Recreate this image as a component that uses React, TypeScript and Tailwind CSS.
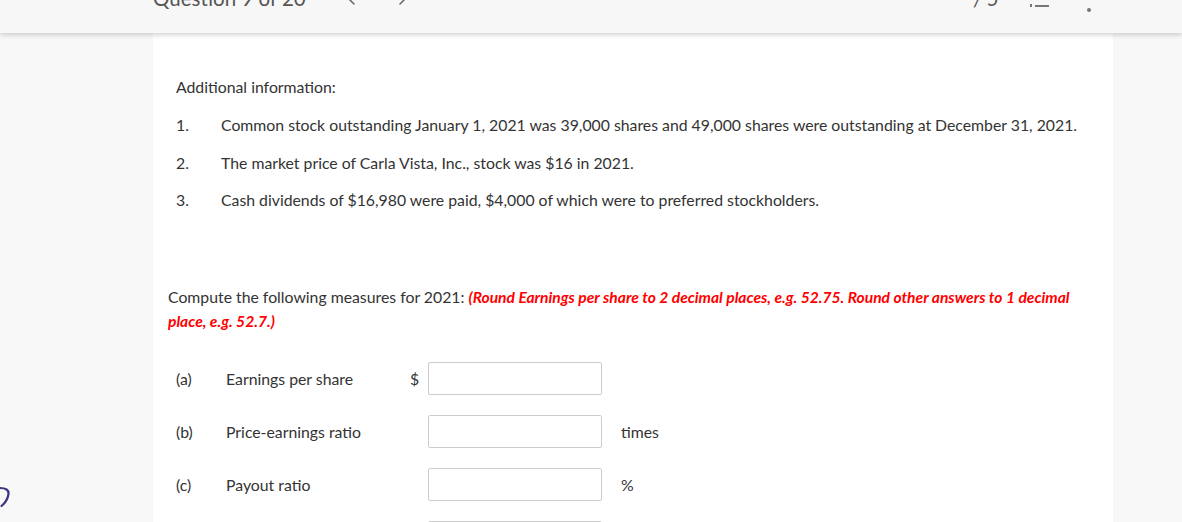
import React from 'react'
import { ChevronLeft, ChevronRight } from 'lucide-react'

const font = { fontFamily: 'Lato, "Liberation Sans", sans-serif' }

const info = [
  'Common stock outstanding January 1, 2021 was 39,000 shares and 49,000 shares were outstanding at December 31, 2021.',
  'The market price of Carla Vista, Inc., stock was $16 in 2021.',
  'Cash dividends of $16,980 were paid, $4,000 of which were to preferred stockholders.',
]

const rows = [
  { key: '(a)', label: 'Earnings per share', pre: '$', unit: '' },
  { key: '(b)', label: 'Price-earnings ratio', pre: '', unit: 'times' },
  { key: '(c)', label: 'Payout ratio', pre: '', unit: '%' },
]

const App = () => {
  return (
    <div className="relative w-[1182px] h-[522px] overflow-hidden bg-[#f8f8f8] text-[#333]" style={font}>
      {/* top bar, scrolled so only the bottom shows */}
      <div className="relative z-10 h-[33px] bg-[#f7f7f7] shadow-[0_2px_5px_rgba(0,0,0,0.18)] overflow-hidden">
        <div className="flex items-center h-[40px] -mt-[22px] text-[#555]">
          <div className="ml-[153px] text-[20.5px] leading-none">Question 9 of 20</div>
          <ChevronLeft className="ml-[33px] w-[24px] h-[24px] text-[#666]" strokeWidth={1.5} />
          <ChevronRight className="ml-[28px] w-[24px] h-[24px] text-[#666]" strokeWidth={1.5} />
          <div className="ml-auto flex items-center">
            <div className="text-[20.5px] leading-none italic">/ 5</div>
            <div className="ml-[31px] flex flex-col gap-[4px] w-[19px] mt-[8px]">
              <div className="flex items-center gap-[3px]"><div className="w-[2px] h-[3px] bg-[#777]" /><div className="flex-1 h-[2px] bg-[#777]" /></div>
              <div className="flex items-center gap-[3px]"><div className="w-[2px] h-[3px] bg-[#777]" /><div className="flex-1 h-[2px] bg-[#777]" /></div>
            </div>
            <div className="ml-[38px] mr-[91px] w-[4px] h-[4px] mt-[24px] rounded-full bg-[#777]" />
          </div>
        </div>
      </div>

      <div className="ml-[153px] w-[960px] h-[489px] bg-white text-[15.8px]">
        <div className="pl-[23px] pt-[44px]">
          <p className="leading-[20px]">Additional information:</p>
          <div className="mt-[18px] flex flex-col gap-[17.5px]">
            {info.map((t, i) => (
              <div key={i} className="flex leading-[20px]">
                <span className="w-[45px]">{i + 1}.</span>
                <span>{t}</span>
              </div>
            ))}
          </div>
        </div>

        <p className="ml-[15px] mt-[75px] w-[915px] leading-[23px]">
          Compute the following measures for 2021:{' '}
          <span className="text-[#ff0000] font-bold italic text-[15.6px]">
            (Round Earnings per share to 2 decimal places, e.g. 52.75. Round other answers to 1 decimal place, e.g. 52.7.)
          </span>
        </p>

        <div className="ml-[23px] mt-[29px] flex flex-col gap-[20px]">
          {rows.map((r) => (
            <div key={r.key} className="flex items-center h-[33px]">
              <span className="w-[50px]">{r.key}</span>
              <span className="w-[184px]">{r.label}</span>
              <span className="w-[18px]">{r.pre}</span>
              <div className="w-[174px] h-[33px] border border-[#ccc] rounded-[2px] bg-white" />
              <span className="ml-[19px]">{r.unit}</span>
            </div>
          ))}
          <div className="flex items-center h-[33px]">
            <span className="w-[252px]" />
            <div className="w-[174px] h-[33px] border border-[#ccc] rounded-[2px] bg-white" />
          </div>
        </div>
      </div>

      {/* pen mark at the left edge */}
      <svg className="absolute left-0 top-[484px]" width="14" height="26" viewBox="0 0 14 26">
        <path d="M0 4 Q 9 4 8.5 10 Q 7.5 17 1.5 22" fill="none" stroke="#3b3585" strokeWidth="2.2" strokeLinecap="round" />
      </svg>
    </div>
  )
}

export default App
